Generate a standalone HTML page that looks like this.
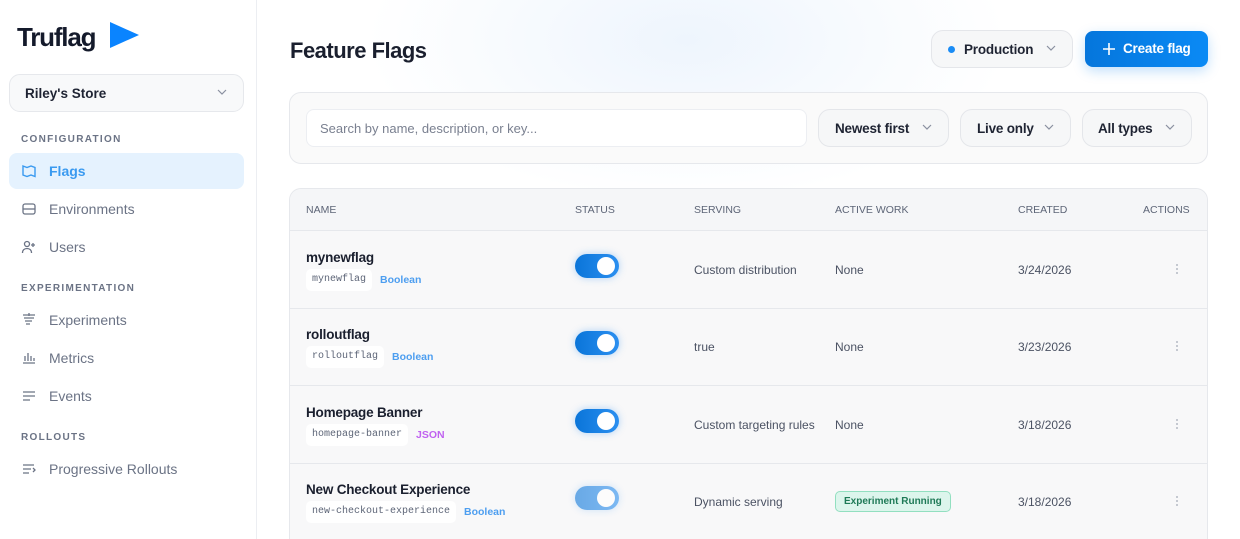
<!DOCTYPE html>
<html><head><meta charset="utf-8"><style>
*{box-sizing:border-box;margin:0;padding:0}
html,body{width:1240px;height:539px;overflow:hidden}
body{font-family:"Liberation Sans",sans-serif;background:#fff;position:relative;color:#111827}
.sb{position:absolute;left:0;top:0;width:257px;height:539px;background:#fff;border-right:1px solid #eceef2}
.logo{position:absolute;left:17px;top:22px;font-size:26px;font-weight:700;color:#141a2b;letter-spacing:-1.2px}
.store{position:absolute;left:9px;top:74px;width:235px;height:38px;border:1px solid #e6e8ec;border-radius:11px;background:#f8f9fa;font-size:13.5px;font-weight:700;padding:11px 15px;color:#1f2433}
.sec{position:absolute;left:21px;font-size:10px;font-weight:700;letter-spacing:1.3px;color:#6b7385}
.it{position:absolute;left:9px;width:235px;height:36px;border-radius:8px;font-size:14px;color:#6b7385;padding:10px 0 0 40px}
.it svg{position:absolute;left:12px;top:10px}
.it.act{background:#e5f2fe;color:#3a9af0;font-weight:700}
.main{position:absolute;left:257px;top:0;right:0;bottom:0;background:radial-gradient(ellipse 320px 160px at 430px 40px,#eef5fd,transparent),#fff}
h1{position:absolute;left:290px;top:38px;font-size:22px;font-weight:700;color:#1a1f2e;letter-spacing:-0.5px}
.btn{position:absolute;border:1px solid #e4e6ea;border-radius:12px;background:#f6f7f8;font-size:13.5px;font-weight:700;color:#1f2433;letter-spacing:-0.2px}
.chev{position:absolute;top:50%;margin-top:-4px}
.filter{position:absolute;left:289px;top:92px;width:919px;height:72px;border:1px solid #e6e8ec;border-radius:12px;background:#fafafa}
.tbl{position:absolute;left:289px;top:188px;width:919px;height:351px;border:1px solid #e6e8ec;border-bottom:none;border-radius:12px 12px 0 0;background:#f8f8f9;overflow:hidden}
.th{position:absolute;top:0;height:42px;left:0;right:0;border-bottom:1px solid #e6e8ec;font-size:10.5px;color:#5d6577;background:#f5f6f8}
.th span{position:absolute;top:15px}
.row{position:absolute;left:0;right:0;height:78px;border-bottom:1px solid #e6e8ec}
.nm{position:absolute;left:16px;top:19px;font-size:13.5px;font-weight:700;color:#1a1f2e;letter-spacing:-0.2px}
.key{position:absolute;left:16px;top:38px;height:22px;background:#fff;border-radius:5px;font-family:"Liberation Mono",monospace;font-size:10px;color:#5d6577;padding:5px 6px}
.ty{position:absolute;top:43px;font-size:10.5px;font-weight:700;color:#4d9ef0}
.tg{position:absolute;left:285px;top:23px;width:44px;height:24px;border-radius:12px;background:linear-gradient(90deg,#0a75d9,#2b8ff0);box-shadow:0 0 8px rgba(40,140,240,.35)}
.tg::after{content:"";position:absolute;right:4px;top:3px;width:18px;height:18px;border-radius:50%;background:#fff}
.c{position:absolute;top:32px;font-size:12px;color:#4b5263}
.dots{position:absolute;left:886px;top:33px;width:2px}
.dots i{display:block;width:2px;height:2px;background:#b5bac4;margin-bottom:2px;border-radius:1px}
</style></head><body>
<div class="sb">
<div class="logo">Truflag<svg width="30" height="28" viewBox="0 0 30 28" style="position:absolute;left:93px;top:0px"><path d="M0 0L29 13L0 26Z" fill="#0a84ff"/></svg></div>
<div class="store">Riley's Store<svg class="chev" style="right:16px" width="10" height="6" viewBox="0 0 10 6"><path d="M1 1l4 4 4-4" fill="none" stroke="#8a90a0" stroke-width="1.2"/></svg></div>
<div class="sec" style="top:134px">CONFIGURATION</div>
<div class="it act" style="top:153px"><svg width="16" height="16" viewBox="0 0 16 16"><path d="M2 3l4 1.5 4-1.5 4 1.5v9l-4-1.5-4 1.5-4-1.5z" fill="none" stroke="#3a9af0" stroke-width="1.4"/></svg>Flags</div>
<div class="it" style="top:191px"><svg width="16" height="16" viewBox="0 0 16 16"><rect x="2" y="3" width="12" height="10" rx="2" fill="none" stroke="#6b7385" stroke-width="1.3"/><path d="M2 8h12" stroke="#6b7385" stroke-width="1.3"/></svg>Environments</div>
<div class="it" style="top:229px"><svg width="16" height="16" viewBox="0 0 16 16"><circle cx="6" cy="5" r="2.5" fill="none" stroke="#6b7385" stroke-width="1.3"/><path d="M1.5 14c0-3 2-4.5 4.5-4.5s4.5 1.5 4.5 4.5M12 4v4M10 6h4" fill="none" stroke="#6b7385" stroke-width="1.3"/></svg>Users</div>
<div class="sec" style="top:283px">EXPERIMENTATION</div>
<div class="it" style="top:302px"><svg width="16" height="16" viewBox="0 0 16 16"><path d="M2 3h12M3 6h10M4 9h7M5 12h4M8 1v3" stroke="#6b7385" stroke-width="1.3"/></svg>Experiments</div>
<div class="it" style="top:340px"><svg width="16" height="16" viewBox="0 0 16 16"><path d="M2 13h12M4 11V6M7 11V3M10 11V6M13 11V8" stroke="#6b7385" stroke-width="1.3"/></svg>Metrics</div>
<div class="it" style="top:378px"><svg width="16" height="16" viewBox="0 0 16 16"><path d="M2 4h12M2 8h12M2 12h7" stroke="#6b7385" stroke-width="1.3"/></svg>Events</div>
<div class="sec" style="top:432px">ROLLOUTS</div>
<div class="it" style="top:451px"><svg width="16" height="16" viewBox="0 0 16 16"><path d="M2 4h11M2 8h8M2 12h6M12 7l2 2-2 2" fill="none" stroke="#6b7385" stroke-width="1.3"/></svg>Progressive Rollouts</div>
</div>
<div class="main"></div>
<h1>Feature Flags</h1>
<div class="btn" style="left:931px;top:30px;width:142px;height:38px;padding:11px 0 0 32px"><span style="position:absolute;left:16px;top:15px;width:7px;height:7px;border-radius:50%;background:#1a8cf5"></span>Production<svg class="chev" style="right:16px" width="10" height="6" viewBox="0 0 10 6"><path d="M1 1l4 4 4-4" fill="none" stroke="#8a90a0" stroke-width="1.2"/></svg></div>
<div style="position:absolute;left:1085px;top:31px;width:123px;height:36px;border-radius:8px;background:linear-gradient(90deg,#0576dc,#0a8af5);color:#fff;font-size:13.5px;font-weight:700;padding:10px 0 0 38px;letter-spacing:-0.2px;box-shadow:0 4px 12px rgba(10,130,240,.25)"><svg style="position:absolute;left:17px;top:11px" width="14" height="14" viewBox="0 0 14 14"><path d="M7 1v12M1 7h12" stroke="#fff" stroke-width="1.6"/></svg>Create flag</div>
<div class="filter">
<div style="position:absolute;left:16px;top:16px;width:501px;height:38px;background:#fff;border:1px solid #eceef2;border-radius:8px;font-size:13px;color:#7a8090;padding:11px 13px">Search by name, description, or key...</div>
<div class="btn" style="left:528px;top:16px;width:131px;height:38px;padding:11px 0 0 16px">Newest first<svg class="chev" style="right:16px" width="10" height="6" viewBox="0 0 10 6"><path d="M1 1l4 4 4-4" fill="none" stroke="#8a90a0" stroke-width="1.2"/></svg></div>
<div class="btn" style="left:670px;top:16px;width:111px;height:38px;padding:11px 0 0 16px">Live only<svg class="chev" style="right:16px" width="10" height="6" viewBox="0 0 10 6"><path d="M1 1l4 4 4-4" fill="none" stroke="#8a90a0" stroke-width="1.2"/></svg></div>
<div class="btn" style="left:792px;top:16px;width:110px;height:38px;padding:11px 0 0 15px">All types<svg class="chev" style="right:16px" width="10" height="6" viewBox="0 0 10 6"><path d="M1 1l4 4 4-4" fill="none" stroke="#8a90a0" stroke-width="1.2"/></svg></div>
</div>
<div class="tbl">
<div class="th"><span style="left:16px">NAME</span><span style="left:285px">STATUS</span><span style="left:404px">SERVING</span><span style="left:545px">ACTIVE WORK</span><span style="left:728px">CREATED</span><span style="left:853px">ACTIONS</span></div>
<div class="row" style="top:42px"><div class="nm">mynewflag</div><div class="key">mynewflag</div><div class="ty" style="left:90px">Boolean</div><div class="tg"></div><div class="c" style="left:404px">Custom distribution</div><div class="c" style="left:545px">None</div><div class="c" style="left:728px">3/24/2026</div><div class="dots"><i></i><i></i><i></i></div></div>
<div class="row" style="top:119px"><div class="nm">rolloutflag</div><div class="key">rolloutflag</div><div class="ty" style="left:102px">Boolean</div><div class="tg"></div><div class="c" style="left:404px">true</div><div class="c" style="left:545px">None</div><div class="c" style="left:728px">3/23/2026</div><div class="dots"><i></i><i></i><i></i></div></div>
<div class="row" style="top:197px"><div class="nm">Homepage Banner</div><div class="key">homepage-banner</div><div class="ty" style="left:126px;color:#c062f0">JSON</div><div class="tg"></div><div class="c" style="left:404px">Custom targeting rules</div><div class="c" style="left:545px">None</div><div class="c" style="left:728px">3/18/2026</div><div class="dots"><i></i><i></i><i></i></div></div>
<div class="row" style="top:274px;height:77px;border-bottom:none"><div class="nm">New Checkout Experience</div><div class="key">new-checkout-experience</div><div class="ty" style="left:174px">Boolean</div><div class="tg" style="opacity:.6"></div><div class="c" style="left:404px">Dynamic serving</div><div style="position:absolute;left:545px;top:28px;height:21px;border:1px solid #92dfc0;background:#dcf5ec;border-radius:5px;font-size:10px;font-weight:700;color:#1f7a57;padding:4px 8px">Experiment Running</div><div class="c" style="left:728px">3/18/2026</div><div class="dots"><i></i><i></i><i></i></div></div>
</div>
</body></html>
